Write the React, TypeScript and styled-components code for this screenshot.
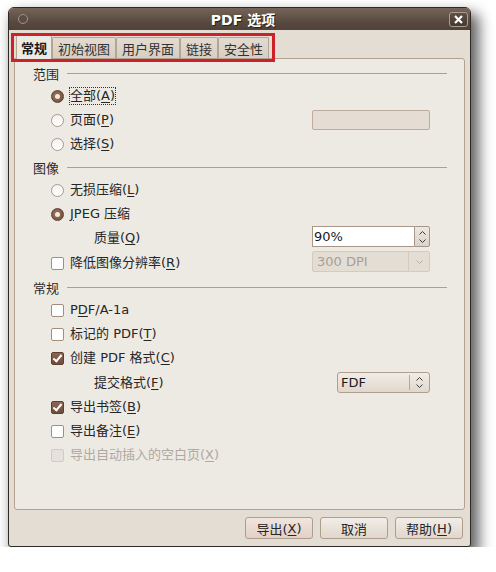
import styled, { createGlobalStyle, css } from 'styled-components';

const GlobalStyle = createGlobalStyle`
  html, body {
    margin: 0;
    background: #ffffff;
  }
  body {
    font-family: "DejaVu Sans", "Noto Sans CJK SC", sans-serif;
    font-size: 13px;
    color: #2a2a2a;
  }
`;

const U = styled.span`
  text-decoration: underline;
  text-underline-offset: 2px;
`;

const Chevron = ({ dir, color = '#3a3a3a' }: { dir: 'up' | 'down'; color?: string }) => (
  <svg width='7' height='4' viewBox='0 0 7 4'>
    <path
      d={dir === 'up' ? 'M0.5 3.5 L3.5 0.5 L6.5 3.5' : 'M0.5 0.5 L3.5 3.5 L6.5 0.5'}
      fill='none'
      stroke={color}
      strokeWidth='1'
    />
  </svg>
);

const App = () => {
  return (
    <Page>
      <GlobalStyle />
      <Window>
        <TitleBar>
          <MenuDot />
          <Title>PDF 选项</Title>
          <CloseButton>
            <svg width='9' height='9' viewBox='0 0 9 9'>
              <path d='M1 1 L8 8 M8 1 L1 8' stroke='#fff' strokeWidth='2.2' />
            </svg>
          </CloseButton>
        </TitleBar>

        <Content>
          <TabStrip>
            <Tab $active>常规</Tab>
            <Tab>初始视图</Tab>
            <Tab>用户界面</Tab>
            <Tab>链接</Tab>
            <Tab>安全性</Tab>
            <Highlight />
          </TabStrip>

          <Panel>
            <SectionHeader>范围</SectionHeader>
            <Row>
              <Radio $checked />
              <Label $focus>
                全部(<U>A</U>)
              </Label>
            </Row>
            <Row>
              <Radio />
              <Label>
                页面(<U>P</U>)
              </Label>
              <PageField />
            </Row>
            <Row>
              <Radio />
              <Label>
                选择(<U>S</U>)
              </Label>
            </Row>

            <SectionHeader>图像</SectionHeader>
            <Row>
              <Radio />
              <Label>
                无损压缩(<U>L</U>)
              </Label>
            </Row>
            <Row>
              <Radio $checked />
              <Label>
                <U>J</U>PEG 压缩
              </Label>
            </Row>
            <Row $sub>
              <Label>
                质量(<U>Q</U>)
              </Label>
              <Spinner>
                <SpinInput>90%</SpinInput>
                <SpinButtons>
                  <Chevron dir='up' />
                  <Chevron dir='down' />
                </SpinButtons>
              </Spinner>
            </Row>
            <Row $height={26}>
              <Check />
              <Label>
                降低图像分辨率(<U>R</U>)
              </Label>
              <DisabledCombo>
                <span>300 DPI</span>
                <ComboArrow>
                  <Chevron dir='down' color='#b9b0a6' />
                </ComboArrow>
              </DisabledCombo>
            </Row>

            <SectionHeader>常规</SectionHeader>
            <Row>
              <Check />
              <Label>
                P<U>D</U>F/A-1a
              </Label>
            </Row>
            <Row>
              <Check />
              <Label>
                标记的 PDF(<U>T</U>)
              </Label>
            </Row>
            <Row>
              <Check $checked />
              <Label>
                创建 PDF 格式(<U>C</U>)
              </Label>
            </Row>
            <Row $sub $height={25}>
              <Label>
                提交格式(<U>F</U>)
              </Label>
              <Combo>
                <span>FDF</span>
                <ComboSplit>
                  <Chevron dir='up' />
                  <Chevron dir='down' />
                </ComboSplit>
              </Combo>
            </Row>
            <Row>
              <Check $checked />
              <Label>
                导出书签(<U>B</U>)
              </Label>
            </Row>
            <Row>
              <Check />
              <Label>
                导出备注(<U>E</U>)
              </Label>
            </Row>
            <Row>
              <Check $disabled />
              <Label $disabled>
                导出自动插入的空白页(<U>X</U>)
              </Label>
            </Row>
          </Panel>

          <ButtonRow>
            <Button $default>
              导出(<U>X</U>)
            </Button>
            <Button>取消</Button>
            <Button>
              帮助(<U>H</U>)
            </Button>
          </ButtonRow>
        </Content>
      </Window>
    </Page>
  );
};

const Page = styled.div`
  padding: 7px 0 0 8px;
`;

const Window = styled.div`
  width: 463px;
  height: 540px;
  box-sizing: border-box;
  border: 1px solid #2f2925;
  border-radius: 6px 6px 3px 3px;
  background: #e4ddd4;
  box-shadow: 6px 8px 14px 2px rgba(0, 0, 0, 0.62);
  display: flex;
  flex-direction: column;
  overflow: hidden;
`;

const TitleBar = styled.div`
  height: 22px;
  flex: none;
  display: grid;
  grid-template-columns: 1fr auto 1fr;
  align-items: center;
  padding: 0 2px 0 9px;
  background: linear-gradient(#75645a, #5a4a40 60%, #4f4239);
`;

const MenuDot = styled.div`
  width: 8px;
  height: 8px;
  border-radius: 50%;
  background: #5b4d44;
  border: 1px solid #a0948a;
`;

const Title = styled.div`
  color: #ffffff;
  font-weight: bold;
  font-size: 14px;
  text-shadow: 1px 1px 0 #2a211c;
`;

const CloseButton = styled.div`
  justify-self: end;
  width: 19px;
  height: 15px;
  box-sizing: border-box;
  border: 1px solid #a99c92;
  border-radius: 3px;
  background: linear-gradient(#5f4f45, #46392f);
  display: flex;
  align-items: center;
  justify-content: center;
`;

const Content = styled.div`
  flex: 1;
  display: flex;
  flex-direction: column;
  padding: 5px 5px 0 5px;
`;

const TabStrip = styled.div`
  position: relative;
  height: 23px;
  display: flex;
  align-items: flex-end;
  padding-left: 2px;
  z-index: 1;
`;

const Tab = styled.div<{ $active?: boolean }>`
  box-sizing: border-box;
  padding: 0 5px;
  border: 1px solid #b3a493;
  border-bottom: none;
  border-radius: 2px 2px 0 0;
  display: flex;
  align-items: center;
  ${(p) =>
    p.$active
      ? css`
          height: 24px;
          margin-bottom: -1px;
          padding: 0 4px;
          background: #edeae4;
          font-weight: bold;
          color: #1a1a1a;
        `
      : css`
          height: 21px;
          background: linear-gradient(#e3dbd1, #d8cec3);
          color: #333;
        `}
`;

const Highlight = styled.div`
  position: absolute;
  left: -3px;
  top: -2px;
  width: 264px;
  height: 29px;
  box-sizing: border-box;
  border: 3px solid #cd2129;
  pointer-events: none;
`;

const Panel = styled.div`
  height: 452px;
  box-sizing: border-box;
  border: 1px solid #b3a290;
  border-radius: 0 3px 3px 3px;
  background: #edeae4;
  padding-top: 3px;
  display: flex;
  flex-direction: column;
`;

const SectionHeader = styled.div`
  height: 22px;
  display: flex;
  align-items: center;
  padding: 0 17px 0 18px;
  color: #2a2a2a;

  &::after {
    content: '';
    flex: 1;
    height: 1px;
    margin-left: 8px;
    background: #a9a198;
  }
`;

const Row = styled.div<{ $sub?: boolean; $height?: number }>`
  height: ${(p) => p.$height ?? 24}px;
  flex: none;
  display: flex;
  align-items: center;
  padding: 0 34px 0 ${(p) => (p.$sub ? 79 : 36)}px;
`;

const Label = styled.span<{ $focus?: boolean; $disabled?: boolean }>`
  color: ${(p) => (p.$disabled ? '#b1a89f' : '#262626')};
  line-height: 16px;
  ${(p) =>
    p.$focus &&
    css`
      outline: 1px dotted #333;
      outline-offset: 0px;
    `}
`;

const Radio = styled.span<{ $checked?: boolean }>`
  width: 13px;
  height: 13px;
  box-sizing: border-box;
  border-radius: 50%;
  margin-right: 6px;
  flex: none;
  position: relative;
  ${(p) =>
    p.$checked
      ? css`
          background: radial-gradient(circle at 40% 40%, #9a725c, #6e4c3a);
          border: 1px solid #5e3f2f;
          &::after {
            content: '';
            position: absolute;
            left: 3px;
            top: 3px;
            width: 5px;
            height: 5px;
            border-radius: 50%;
            background: #f2e8e2;
          }
        `
      : css`
          background: linear-gradient(#f4f2ef, #ffffff);
          border: 1px solid #a99989;
        `}
`;

const Check = styled.span<{ $checked?: boolean; $disabled?: boolean }>`
  width: 13px;
  height: 13px;
  box-sizing: border-box;
  border-radius: 2px;
  margin-right: 6px;
  flex: none;
  position: relative;
  ${(p) =>
    p.$checked
      ? css`
          background: linear-gradient(#8d6652, #6f4d3b);
          border: 1px solid #5d3f30;
          &::after {
            content: '';
            position: absolute;
            left: 3px;
            top: 0px;
            width: 3px;
            height: 7px;
            border: solid #ffffff;
            border-width: 0 2px 2px 0;
            transform: rotate(40deg);
          }
        `
      : p.$disabled
        ? css`
            background: #e6e1dc;
            border: 1px solid #d3cbc2;
          `
        : css`
            background: #ffffff;
            border: 1px solid #a48f7d;
          `}
`;

const PageField = styled.div`
  margin-left: auto;
  width: 118px;
  height: 20px;
  box-sizing: border-box;
  border: 1px solid #bdab9b;
  border-radius: 2px;
  background: #e5ddd3;
`;

const Spinner = styled.div`
  margin-left: auto;
  margin-top: -3px;
  width: 118px;
  height: 21px;
  display: flex;
`;

const SpinInput = styled.div`
  flex: 1;
  box-sizing: border-box;
  border: 1px solid #a89787;
  border-right: none;
  background: #ffffff;
  padding-left: 1px;
  display: flex;
  align-items: center;
  color: #1a1a1a;
`;

const SpinButtons = styled.div`
  width: 16px;
  box-sizing: border-box;
  border: 1px solid #a89787;
  border-radius: 0 2px 2px 0;
  background: linear-gradient(#ede7e0, #dcd3c9);
  display: flex;
  flex-direction: column;
  align-items: center;
  justify-content: center;
  gap: 4px;
`;

const DisabledCombo = styled.div`
  margin-left: auto;
  margin-top: -3px;
  width: 118px;
  height: 21px;
  box-sizing: border-box;
  border: 1px solid #d3cac0;
  border-radius: 2px;
  background: #e4ddd4;
  display: flex;
  align-items: center;
  color: #a79f97;

  span {
    flex: 1;
    padding-left: 4px;
  }
`;

const ComboArrow = styled.div`
  width: 20px;
  height: 100%;
  border-left: 1px solid #d3cac0;
  display: flex;
  align-items: center;
  justify-content: center;
`;

const Combo = styled.div`
  margin-left: auto;
  width: 93px;
  height: 21px;
  box-sizing: border-box;
  border: 1px solid #b09f8e;
  border-radius: 3px;
  background: linear-gradient(#f1ece6, #e0d8ce);
  display: flex;
  align-items: center;
  color: #1a1a1a;

  span {
    flex: 1;
    padding-left: 3px;
  }
`;

const ComboSplit = styled.div`
  width: 18px;
  height: 15px;
  border-left: 1px solid #b7a898;
  display: flex;
  flex-direction: column;
  align-items: center;
  justify-content: center;
  gap: 3px;
  margin-right: 1px;
`;

const ButtonRow = styled.div`
  display: flex;
  justify-content: flex-end;
  gap: 7px;
  margin-top: 7px;
  padding-right: 2px;
`;

const Button = styled.div<{ $default?: boolean }>`
  width: 68px;
  height: 22px;
  box-sizing: border-box;
  border: 1px solid #b09e8c;
  border-radius: 3px;
  display: flex;
  align-items: center;
  justify-content: center;
  color: #262626;
  background: ${(p) =>
    p.$default
      ? 'linear-gradient(#f1e5de, #e2d0c6)'
      : 'linear-gradient(#f2ede8, #e0d7cd)'};
`;

export default App;
